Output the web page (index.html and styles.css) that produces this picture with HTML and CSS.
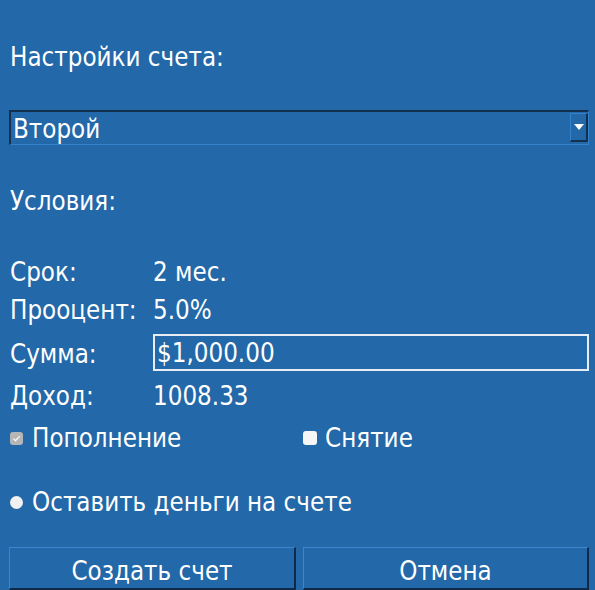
FILE: index.html
```html
<!DOCTYPE html>
<html lang="ru">
<head>
<meta charset="utf-8">
<link rel="stylesheet" href="styles.css">
</head>
<body>
<div class="panel">
  <div class="heading">Настройки счета:</div>
  <div class="select">
    <span class="select-text">Второй</span>
    <span class="select-btn"><span class="tri"></span></span>
  </div>
  <div class="section">Условия:</div>
  <div class="grid">
    <div class="lbl">Срок:</div><div class="val">2 мес.</div>
    <div class="lbl">Прооцент:</div><div class="val">5.0%</div>
    <div class="lbl mid">Сумма:</div><div class="input">$1,000.00</div>
    <div class="lbl">Доход:</div><div class="val">1008.33</div>
  </div>
  <div class="checks">
    <div class="check"><span class="box box-on"><svg viewBox="0 0 13 13" width="13" height="13"><path d="M3.5 6.8 L5.5 8.6 L9.6 4.4" fill="none" stroke="#fff" stroke-width="1.2"/></svg></span>Пополнение</div>
    <div class="check"><span class="box box-off"></span>Снятие</div>
  </div>
  <div class="radio-row"><span class="radio"></span>Оставить деньги на счете</div>
  <div class="buttons">
    <div class="btn">Создать счет</div>
    <div class="btn">Отмена</div>
  </div>
</div>
</body>
</html>
```
FILE: styles.css
```css
html, body {
  margin: 0;
  padding: 0;
  background: #2368a8;
}
body {
  width: 595px;
  height: 590px;
  overflow: hidden;
  font-family: "DejaVu Sans Condensed", "DejaVu Sans", sans-serif;
  font-stretch: condensed;
  font-size: 25.7px;
  line-height: 28px;
  color: #ffffff;
}
.panel {
  display: flex;
  flex-direction: column;
  padding: 43px 6px 0 10px;
}
.heading {
  height: 28px;
}
.select {
  margin: 39px 0 0 -1px;
  height: 35px;
  box-sizing: border-box;
  border-top: 2px solid #14304f;
  border-left: 2px solid #14304f;
  border-bottom: 1px solid #3582cc;
  border-right: 1px solid #3582cc;
  display: flex;
  align-items: flex-start;
  justify-content: space-between;
  padding: 1px 0 0 2px;
}
.select-text {
  line-height: 28px;
  margin-top: 2px;
}
.select-btn {
  width: 18px;
  height: 29px;
  box-sizing: border-box;
  border-top: 1px solid #3582cc;
  border-left: 1px solid #3582cc;
  border-right: 2px solid #14304f;
  border-bottom: 2px solid #14304f;
  display: flex;
  align-items: center;
  justify-content: center;
}
.tri {
  width: 0;
  height: 0;
  border-left: 5px solid transparent;
  border-right: 5px solid transparent;
  border-top: 6px solid #ffffff;
}
.section {
  margin-top: 42px;
  height: 28px;
}
.grid {
  margin-top: 43px;
  display: grid;
  grid-template-columns: 143px 1fr;
  grid-template-rows: 28px 28px 38px 28px;
  row-gap: 10px;
}
.grid .mid {
  align-self: center;
  padding-top: 2px;
}
.input {
  box-sizing: border-box;
  height: 37px;
  border: 2px solid #e6edf5;
  padding: 3px 0 0 2px;
}
.checks {
  margin-top: 14px;
  display: grid;
  grid-template-columns: 293px 1fr;
}
.check {
  display: flex;
  align-items: center;
  height: 28px;
}
.box {
  width: 13px;
  height: 13px;
  border-radius: 3px;
  margin-right: 9px;
  display: inline-block;
  flex: none;
}
.box svg {
  display: block;
}
.box-on {
  background: #b6b6b6;
}
.box-off {
  background: #f6f6f6;
  width: 14px;
  height: 14px;
  margin-right: 8px;
}
.radio-row {
  margin-top: 36px;
  display: flex;
  align-items: center;
  height: 28px;
}
.radio {
  width: 13px;
  height: 13px;
  border-radius: 50%;
  background: #f2f2f2;
  margin-right: 9px;
  flex: none;
}
.buttons {
  margin: 31px 0 0 -1px;
  display: grid;
  grid-template-columns: 287px 286px;
  column-gap: 7px;
}
.btn {
  height: 43px;
  box-sizing: border-box;
  border-top: 1px solid #3b86cf;
  border-left: 1px solid #3b86cf;
  border-right: 2px solid #0e2a48;
  border-bottom: 2px solid #0e2a48;
  display: flex;
  align-items: flex-start;
  justify-content: center;
  padding-top: 9px;
}
```
